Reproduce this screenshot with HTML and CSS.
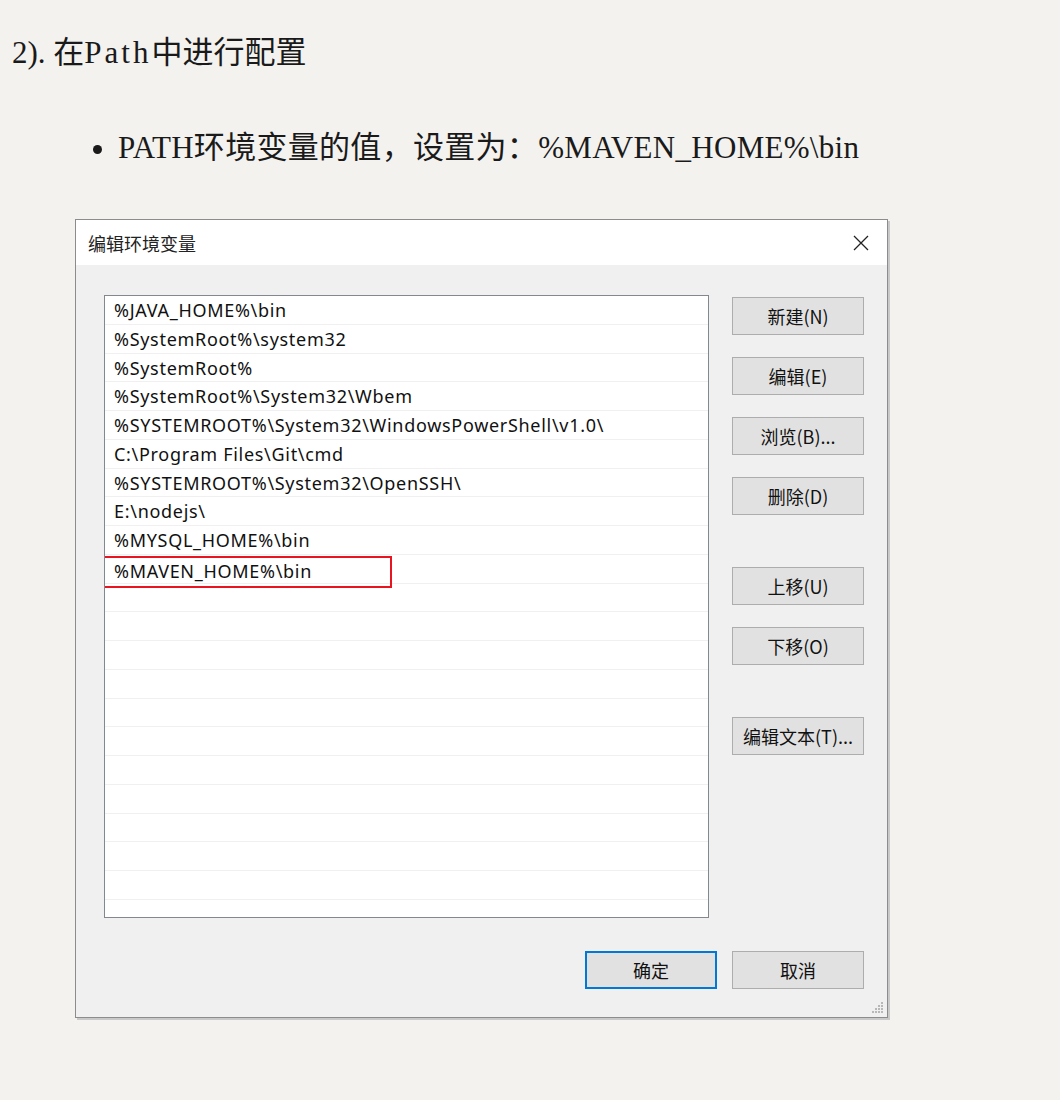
FILE: index.html
```html
<!DOCTYPE html>
<html lang="zh-CN">
<head>
<meta charset="utf-8">
<title>Path</title>
<link rel="stylesheet" href="styles.css">
</head>
<body>
<h4 class="step">2). 在<span class="wide">Path</span>中进行配置</h4>
<ul class="items">
  <li>PATH环境变量的值，设置为：%MAVEN_HOME%\bin</li>
</ul>
<div class="shot">
  <div class="dialog">
    <div class="titlebar">
      <span class="title">编辑环境变量</span>
      <svg class="close" width="18" height="18" viewBox="0 0 18 18"><path d="M2 2L16 16M16 2L2 16" stroke="#222" stroke-width="1.3" fill="none"/></svg>
    </div>
    <div class="body">
      <div class="main">
        <div class="list">
          <div class="row">%JAVA_HOME%\bin</div>
          <div class="row">%SystemRoot%\system32</div>
          <div class="row">%SystemRoot%</div>
          <div class="row">%SystemRoot%\System32\Wbem</div>
          <div class="row">%SYSTEMROOT%\System32\WindowsPowerShell\v1.0\</div>
          <div class="row">C:\Program Files\Git\cmd</div>
          <div class="row">%SYSTEMROOT%\System32\OpenSSH\</div>
          <div class="row">E:\nodejs\</div>
          <div class="row">%MYSQL_HOME%\bin</div>
          <div class="row"><span class="hl">%MAVEN_HOME%\bin</span></div>
          <div class="row"></div><div class="row"></div><div class="row"></div>
          <div class="row"></div><div class="row"></div><div class="row"></div>
          <div class="row"></div><div class="row"></div><div class="row"></div>
          <div class="row"></div><div class="row"></div><div class="row"></div>
        </div>
        <div class="side">
          <div class="group">
            <button class="btn">新建(N)</button>
            <button class="btn">编辑(E)</button>
            <button class="btn">浏览(B)...</button>
            <button class="btn">删除(D)</button>
          </div>
          <div class="group">
            <button class="btn">上移(U)</button>
            <button class="btn">下移(O)</button>
          </div>
          <div class="group">
            <button class="btn">编辑文本(T)...</button>
          </div>
        </div>
      </div>
      <div class="footer">
        <button class="btn primary">确定</button>
        <button class="btn">取消</button>
      </div>
      <svg class="grip" width="12" height="12" viewBox="0 0 12 12" fill="#b8b8b8">
        <rect x="9" y="0" width="2" height="2"/>
        <rect x="6" y="3" width="2" height="2"/><rect x="9" y="3" width="2" height="2"/>
        <rect x="3" y="6" width="2" height="2"/><rect x="6" y="6" width="2" height="2"/><rect x="9" y="6" width="2" height="2"/>
        <rect x="0" y="9" width="2" height="2"/><rect x="3" y="9" width="2" height="2"/><rect x="6" y="9" width="2" height="2"/><rect x="9" y="9" width="2" height="2"/>
      </svg>
    </div>
  </div>
</div>
</body>
</html>
```

FILE: styles.css
```css
html, body {
  margin: 0;
  padding: 0;
  background: #f3f2ef;
}
body {
  font-family: "Liberation Serif", "Noto Sans CJK SC", serif;
  color: #1a1a1a;
}
.step {
  margin: 0;
  padding: 32px 0 0 12px;
  font-size: 31px;
  font-weight: normal;
  line-height: 42px;
}
.wide {
  letter-spacing: 3px;
}
.items {
  margin: 53px 0 0 0;
  padding: 0 0 0 118px;
  font-size: 31px;
  line-height: 42px;
  letter-spacing: 0.3px;
}
.items li {
  list-style: disc;
}
.shot {
  margin: 50px 0 0 75px;
  width: 814px;
  padding: 0 0 2px 0;
}
.dialog {
  width: 811px;
  border: 1px solid #8c8c8c;
  box-shadow: 2px 2px 0 #c9c9c9;
  background: #f0f0f0;
  font-family: "Noto Sans", "Noto Sans CJK SC", sans-serif;
  font-size: 18px;
  letter-spacing: 0.7px;
  color: #111;
}
.titlebar {
  height: 45px;
  background: #ffffff;
  display: flex;
  align-items: center;
  justify-content: space-between;
  padding: 0 17px 0 12px;
  letter-spacing: 0;
}
.title {
  font-family: "Noto Sans CJK SC", sans-serif;
  font-size: 18px;
  color: #222;
}
.body {
  position: relative;
  padding: 30px 23px 28px 28px;
}
.main {
  display: flex;
  gap: 23px;
}
.list {
  width: 603px;
  height: 621px;
  border: 1px solid #828790;
  background: #fff;
  overflow: hidden;
}
.row {
  height: 28.75px;
  box-sizing: border-box;
  border-bottom: 1px solid #f0f0f0;
  padding-left: 9px;
  line-height: 28px;
  white-space: nowrap;
  position: relative;
}
.hl {
  position: absolute;
  left: -2px;
  top: 1px;
  width: 289px;
  height: 32px;
  border: 2px solid #e8141f;
  box-sizing: border-box;
  padding-left: 9px;
  line-height: 26px;
}
.side {
  display: flex;
  flex-direction: column;
  gap: 52px;
  padding-top: 2px;
}
.group {
  display: flex;
  flex-direction: column;
  gap: 22px;
}
.btn {
  width: 132px;
  height: 38px;
  background: #e1e1e1;
  border: 1px solid #adadad;
  font-family: "Noto Sans CJK SC", sans-serif;
  font-size: 18px;
  letter-spacing: 0;
  color: #111;
  padding: 0;
  margin: 0;
}
.footer {
  display: flex;
  justify-content: flex-end;
  gap: 15px;
  margin-top: 33px;
}
.primary {
  border: 2px solid #0078d7;
  width: 132px;
}
.grip {
  position: absolute;
  right: 3px;
  bottom: 3px;
}
```
